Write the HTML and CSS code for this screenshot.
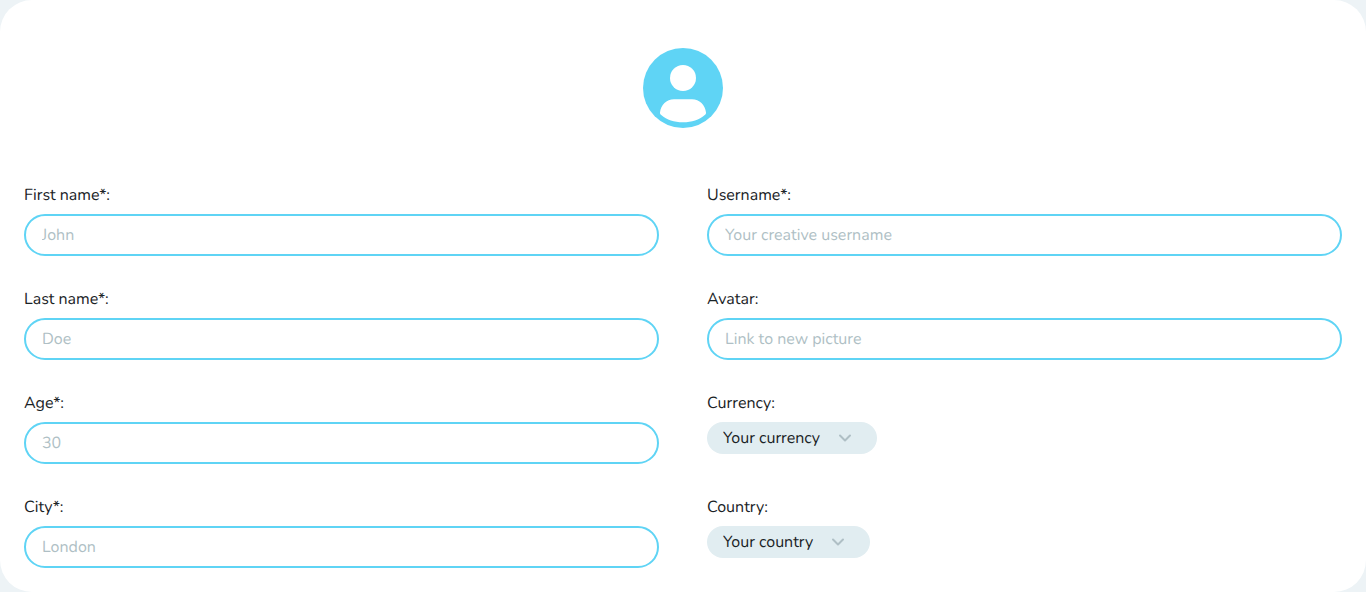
FILE: index.html
```html
<!DOCTYPE html>
<html lang="en">
<head>
<meta charset="utf-8">
<meta name="viewport" content="width=device-width, initial-scale=1">
<title>Profile</title>
<link rel="stylesheet" href="styles.css">
</head>
<body>
<main class="card">
  <svg class="avatar" viewBox="0 0 80 80" role="img" aria-label="Profile picture">
    <circle class="avatar-disc" cx="40" cy="40" r="40"/>
    <circle class="avatar-person" cx="40" cy="30" r="13"/>
    <path class="avatar-person" d="M31 51.300H49C56.500 51.300 62.200 57 63 64.500C63.100 65.700 62.700 66.200 61.800 66.900C56 71.700 49 74.200 40 74.200S24 71.700 18.200 66.900C17.300 66.200 16.900 65.700 17 64.500C17.800 57 23.500 51.300 31 51.300Z"/>
  </svg>
  <form class="form">
    <div class="field">
      <label class="label" for="first-name">First name*:</label>
      <input class="input" id="first-name" type="text" placeholder="John">
    </div>
    <div class="field">
      <label class="label" for="username">Username*:</label>
      <input class="input" id="username" type="text" placeholder="Your creative username">
    </div>
    <div class="field">
      <label class="label" for="last-name">Last name*:</label>
      <input class="input" id="last-name" type="text" placeholder="Doe">
    </div>
    <div class="field">
      <label class="label" for="avatar">Avatar:</label>
      <input class="input" id="avatar" type="text" placeholder="Link to new picture">
    </div>
    <div class="field">
      <label class="label" for="age">Age*:</label>
      <input class="input" id="age" type="text" inputmode="numeric" placeholder="30">
    </div>
    <div class="field">
      <label class="label" for="currency">Currency:</label>
      <div class="picker">
        <select class="select" id="currency"><option>Your currency</option></select>
        <svg class="chevron" viewBox="0 0 14 8" aria-hidden="true"><path d="M2 1.500L7 6.500L12 1.500"/></svg>
      </div>
    </div>
    <div class="field">
      <label class="label" for="city">City*:</label>
      <input class="input" id="city" type="text" placeholder="London">
    </div>
    <div class="field">
      <label class="label" for="country">Country:</label>
      <div class="picker">
        <select class="select" id="country"><option>Your country</option></select>
        <svg class="chevron" viewBox="0 0 14 8" aria-hidden="true"><path d="M2 1.500L7 6.500L12 1.500"/></svg>
      </div>
    </div>
  </form>
</main>
</body>
</html>
```
FILE: styles.css
```css
* {
  box-sizing: border-box;
}

body {
  margin: 0;
  background: #edf3f6;
  color: #1a2326;
  font: 16px/22px Nunito, "Open Sans", sans-serif;
  text-rendering: geometricPrecision;
}

.card {
  display: flex;
  flex-direction: column;
  gap: 56px;
  padding: 48px 24px 24px;
  border-radius: 32px;
  background: #fff;
}

.avatar {
  width: 80px;
  height: 80px;
  align-self: center;
}

.avatar-disc {
  fill: #5fd4f5;
}

.avatar-person {
  fill: #fff;
}

.form {
  display: grid;
  grid-template-columns: 1fr 1fr;
  gap: 32px 48px;
}

.field {
  display: flex;
  flex-direction: column;
  align-items: flex-start;
  gap: 8px;
  min-width: 0;
}

.input {
  width: 100%;
  height: 42px;
  padding: 0 16px;
  border: 2px solid #5fd4f5;
  border-radius: 24px;
  background: #fff;
  color: inherit;
  font: inherit;
  text-rendering: inherit;
}

.input::placeholder {
  color: #afbfc5;
  opacity: 1;
}

.picker {
  display: grid;
  align-items: center;
}

.select {
  grid-area: 1 / 1;
  height: 32px;
  padding: 0 56px 0 16px;
  border: 0;
  border-radius: 16px;
  background: #e1edf1;
  color: inherit;
  font: inherit;
  text-rendering: inherit;
  appearance: none;
}

.chevron {
  grid-area: 1 / 1;
  justify-self: end;
  width: 14px;
  height: 8px;
  margin-right: 25px;
  fill: none;
  stroke: #afbfc5;
  stroke-width: 2;
  stroke-linecap: round;
  stroke-linejoin: round;
  pointer-events: none;
}
```
